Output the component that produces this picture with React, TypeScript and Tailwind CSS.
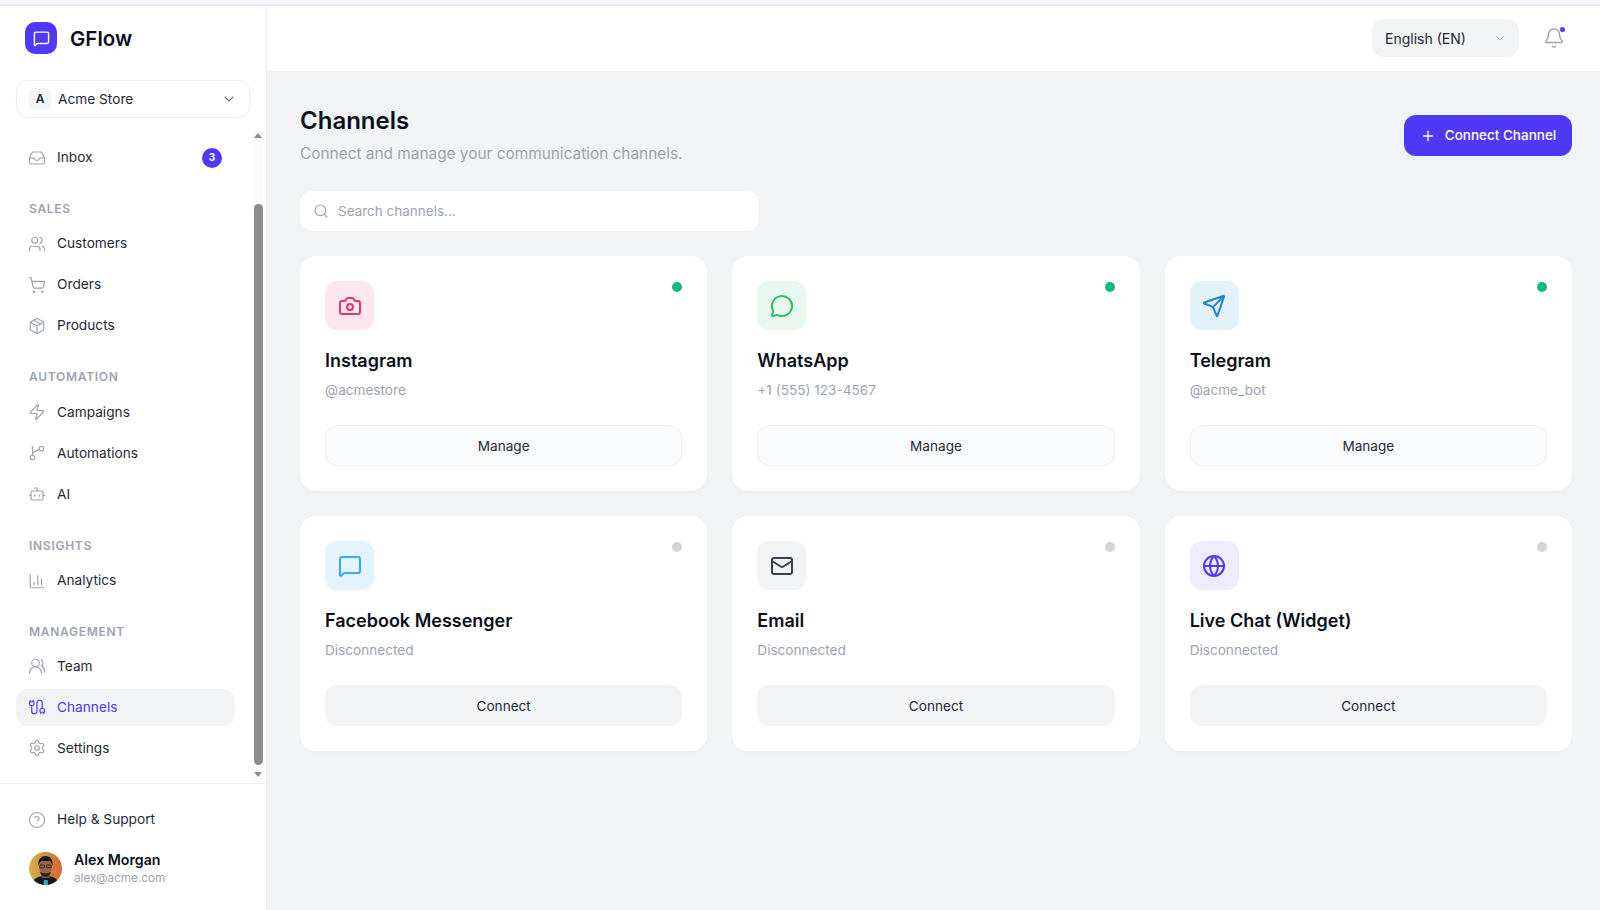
import React from 'react';
import {
  MessageSquare, ChevronDown, Inbox, Users, UsersRound, ShoppingCart, Package, Zap, Bot, ChartColumn,
  Cable, Settings, CircleHelp, Bell, Plus, Search, Camera, MessageCircle, Send, Mail, Globe,
} from 'lucide-react';

interface NavItem {
  label: string;
  icon: React.ElementType;
  active?: boolean;
  badge?: string;
}

// branch joins the stem higher up than lucide's git-branch
function BranchIcon({ className, strokeWidth }: { className?: string; strokeWidth?: number }) {
  return (
    <svg viewBox="0 0 24 24" fill="none" stroke="currentColor" strokeWidth={strokeWidth} strokeLinecap="round" strokeLinejoin="round" className={className}>
      <line x1="6" y1="3" x2="6" y2="15" />
      <circle cx="18" cy="6" r="3" />
      <circle cx="6" cy="18" r="3" />
      <path d="M15.300 7.300 9.500 10Q6.500 11.300 6 13.500" />
    </svg>
  );
}

const sections: { title: string; items: NavItem[] }[] = [
  { title: 'Sales', items: [
    { label: 'Customers', icon: Users },
    { label: 'Orders', icon: ShoppingCart },
    { label: 'Products', icon: Package },
  ] },
  { title: 'Automation', items: [
    { label: 'Campaigns', icon: Zap },
    { label: 'Automations', icon: BranchIcon },
    { label: 'AI', icon: Bot },
  ] },
  { title: 'Insights', items: [{ label: 'Analytics', icon: ChartColumn }] },
  { title: 'Management', items: [
    { label: 'Team', icon: UsersRound },
    { label: 'Channels', icon: Cable, active: true },
    { label: 'Settings', icon: Settings },
  ] },
];

const channels = [
  { name: 'Instagram', sub: '@acmestore', icon: Camera, box: 'bg-[#fce7ef]', color: 'text-[#e6356d]', on: true },
  { name: 'WhatsApp', sub: '+1 (555) 123-4567', icon: MessageCircle, box: 'bg-[#e8f8ee]', color: 'text-[#25c565]', on: true },
  { name: 'Telegram', sub: '@acme_bot', icon: Send, box: 'bg-[#e3f1fb]', color: 'text-[#1c84d4]', on: true },
  { name: 'Facebook Messenger', sub: 'Disconnected', icon: MessageSquare, box: 'bg-[#e3f4ff]', color: 'text-[#35a8ff]', on: false },
  { name: 'Email', sub: 'Disconnected', icon: Mail, box: 'bg-[#f1f3f5]', color: 'text-[#374151]', on: false },
  { name: 'Live Chat (Widget)', sub: 'Disconnected', icon: Globe, box: 'bg-[#efecff]', color: 'text-[#4f39f6]', on: false },
];

function Row({ item }: { item: NavItem }) {
  const Icon = item.icon;
  return (
    <div className={`flex h-[37px] items-center gap-[11px] rounded-xl pl-3 pr-[13px] text-[13.7px] ${item.active ? 'bg-[#f1f3f5] text-[#4f39f6]' : 'text-[#1f2937]'}`}>
      <Icon className={`h-[18px] w-[18px] ${item.active ? 'text-[#4f39f6]' : 'text-[#9ca3af]'}`} strokeWidth={1.6} />
      <span className="flex-1">{item.label}</span>
      {item.badge && (
        <span className="flex h-5 w-5 items-center justify-center rounded-full bg-[#4f39f6] text-[10px] font-bold text-white">{item.badge}</span>
      )}
    </div>
  );
}

function Avatar() {
  return (
    <svg viewBox="0 0 33 33" className="h-[33px] w-[33px] shrink-0">
      <defs>
        <clipPath id="avatar-clip"><circle cx="16.5" cy="16.5" r="16.5" /></clipPath>
        <linearGradient id="avatar-bg" x1="0" y1="0" x2="1" y2="0">
          <stop offset="0" stopColor="#d9b04a" />
          <stop offset="0.6" stopColor="#c98a3e" />
          <stop offset="1" stopColor="#e0642c" />
        </linearGradient>
      </defs>
      <g clipPath="url(#avatar-clip)">
        <rect width="33" height="33" fill="url(#avatar-bg)" />
        <path d="M3 33c1-7 6-9 13.500-9S29 26 30 33z" fill="#17171b" />
        <rect x="12.500" y="19" width="8" height="7" fill="#7a4a32" />
        <ellipse cx="16.500" cy="15" rx="6.500" ry="8" fill="#9a6547" />
        <path d="M9.500 14c-1-7 3-10 7-10s8 3 7 10c-1-3-2-5-3.500-5.500-2 .8-5 .8-7 0C11.500 9 10.500 11 9.500 14z" fill="#1b1615" />
        <path d="M11 20c1 3.500 3 4.500 5.500 4.500S21 23.500 22 20c-1.500 1-3 1.300-5.500 1.300S12.500 21 11 20z" fill="#2a1f1c" />
        <rect x="10.800" y="13" width="4.800" height="2.800" rx="1" fill="none" stroke="#231a18" strokeWidth="0.8" />
        <rect x="17.400" y="13" width="4.800" height="2.800" rx="1" fill="none" stroke="#231a18" strokeWidth="0.8" />
        <path d="M15 28h3.500l.8 5h-5z" fill="#3aa0dc" />
      </g>
    </svg>
  );
}

function ChannelCard({ channel }: { channel: (typeof channels)[number] }) {
  const Icon = channel.icon;
  return (
    <div className="relative rounded-2xl bg-white p-[25px] shadow-[0_1px_3px_rgba(17,24,39,0.04)]">
      <span className={`absolute right-[25px] top-[26px] h-2.5 w-2.5 rounded-full ${channel.on ? 'bg-[#10b981]' : 'bg-[#d1d5db]'}`} />
      <div className={`flex h-[49px] w-[49px] items-center justify-center rounded-xl ${channel.box}`}>
        <Icon className={`h-6 w-6 ${channel.color}`} strokeWidth={2} />
      </div>
      <h3 className="mt-[17px] text-[18px] font-semibold leading-7 text-[#0b0f19]">{channel.name}</h3>
      <p className="mt-[5px] text-[13.600px] leading-5 text-[#9ca3af]">{channel.sub}</p>
      <button className={`mt-[25px] flex h-[41px] w-full items-center justify-center rounded-xl pt-px text-[13.6px] text-[#1f2937] ${channel.on ? 'border border-[#eef0f2] bg-[#f9fafb]' : 'bg-[#f1f3f5]'}`}>
        {channel.on ? 'Manage' : 'Connect'}
      </button>
    </div>
  );
}

export default function App() {
  return (
    <div className="flex h-[910px] flex-col overflow-hidden bg-[#f1f3f5] font-['Inter',sans-serif]">
      <div className="h-1.5 shrink-0 border-b-2 border-[#e9e9f1] bg-[#f6f6fc]" />
      <div className="flex min-h-0 flex-1">
        <aside className="flex w-[267px] shrink-0 flex-col border-r border-[#eef0f2] bg-white">
          <div className="flex items-start gap-[13px] px-[25px] pt-4">
            <div className="flex h-8 w-8 items-center justify-center rounded-[10px] bg-[#4f39f6]">
              <MessageSquare className="h-[17px] w-[17px] text-white" strokeWidth={2} />
            </div>
            <span className="mt-px text-[20.500px] font-semibold leading-8 text-[#0b0f19]">GFlow</span>
          </div>

          <div className="mx-4 mt-[25px] flex h-[38px] items-center gap-[7px] rounded-xl border border-[#eceef1] px-3 shadow-[0_1px_2px_rgba(17,24,39,0.03)]">
            <span className="flex h-[22px] w-[22px] items-center justify-center rounded-md bg-[#f3f4f6] text-xs font-semibold text-[#1f2937]">A</span>
            <span className="flex-1 text-[13.7px] text-[#1f2937]">Acme Store</span>
            <ChevronDown className="h-4 w-4 text-[#6b7280]" strokeWidth={1.6} />
          </div>

          <nav className="relative mt-[13px] min-h-0 flex-1 overflow-hidden pl-4 pr-[31px] pt-2">
            <Row item={{ label: 'Inbox', icon: Inbox, badge: '3' }} />
            {sections.map((section, i) => (
              <div key={section.title} className={i === 0 ? 'mt-[24.500px]' : 'mt-[25px]'}>
                <div className={`h-4 px-[13px] text-xs font-semibold uppercase leading-4 tracking-[0.06em] text-[#9ca3af] ${i === 3 ? 'mb-[7.500px]' : 'mb-[8.500px]'}`}>{section.title}</div>
                <div className="flex flex-col gap-1">
                  {section.items.map((item) => <Row key={item.label} item={item} />)}
                </div>
              </div>
            ))}
            {/* scrollbar */}
            <div className="absolute bottom-0 right-[3px] top-0 w-[9px] bg-[#fbfbfb]">
              <div className="absolute left-0 top-0.5 h-0 w-0 border-x-[4.500px] border-b-[5px] border-x-transparent border-b-[#8c8c8c]" />
              <div className="absolute left-0 top-[73px] h-[561px] w-[9px] rounded-[5px] bg-[#8c8c8c]" />
              <div className="absolute bottom-1.5 left-0 h-0 w-0 border-x-[4.500px] border-t-[5px] border-x-transparent border-t-[#8c8c8c]" />
            </div>
          </nav>

          <div className="border-t border-[#eef0f2] px-4 pb-[22px] pt-[17px]">
            <Row item={{ label: 'Help & Support', icon: CircleHelp }} />
            <div className="mt-2.5 flex items-center gap-3 px-[13px]">
              <Avatar />
              <div className="pt-[3px]">
                <div className="text-[14.200px] font-semibold leading-[18px] text-[#0b0f19]">Alex Morgan</div>
                <div className="text-[11.700px] leading-[19px] text-[#9ca3af]">alex@acme.com</div>
              </div>
            </div>
          </div>
        </aside>

        <div className="flex min-w-0 flex-1 flex-col">
          <header className="flex h-[66px] shrink-0 items-center justify-end gap-[24px] border-b border-[#eceef1] bg-white pb-px pr-[35px]">
            <div className="flex h-[38px] w-[147px] items-center justify-between rounded-xl bg-[#f1f3f5] pl-[13px] pr-3 text-[14px] text-[#1f2937]">
              English (EN)
              <ChevronDown className="h-3.5 w-3.5 text-[#9ca3af]" strokeWidth={1.6} />
            </div>
            <div className="relative">
              <Bell className="h-[22px] w-[22px] text-[#9ca3af]" strokeWidth={1.6} />
              <span className="absolute right-0 top-0 h-[5px] w-[5px] rounded-full bg-[#4f39f6]" />
            </div>
          </header>

          <main className="flex-1 pl-[33px] pr-7 pt-[33px]">
            <div className="flex items-center justify-between">
              <div>
                <h1 className="text-2xl font-semibold leading-8 text-[#0b0f19]">Channels</h1>
                <p className="mt-[5px] text-[15.400px] leading-6 text-[#9ca3af]">Connect and manage your communication channels.</p>
              </div>
              <button className="flex h-[41px] w-[168px] items-center justify-center gap-[9px] rounded-xl bg-[#4f39f6] text-[13.500px] font-medium text-white">
                <Plus className="h-4 w-4" strokeWidth={2} />
                Connect Channel
              </button>
            </div>

            <div className="mt-[25px] flex h-10 w-[459px] items-center gap-[9px] rounded-xl bg-white px-[13px] shadow-[0_1px_2px_rgba(17,24,39,0.03)]">
              <Search className="h-4 w-4 text-[#9ca3af]" strokeWidth={1.8} />
              <span className="text-[13.500px] text-[#9ca3af]">Search channels...</span>
            </div>

            <div className="mt-[25px] grid grid-cols-3 gap-[25px]">
              {channels.map((channel) => <ChannelCard key={channel.name} channel={channel} />)}
            </div>
          </main>
        </div>
      </div>
    </div>
  );
}
